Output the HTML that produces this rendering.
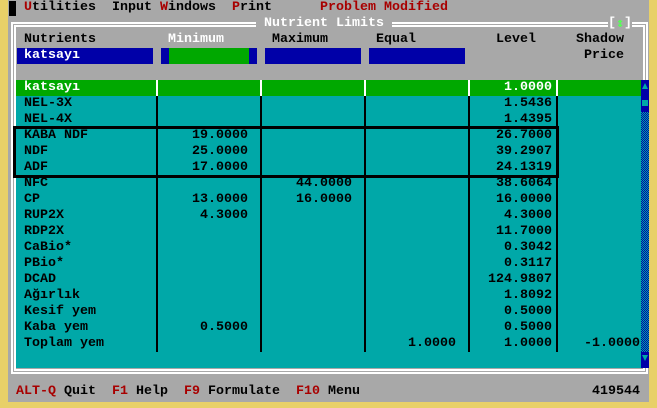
<!DOCTYPE html>
<html><head><meta charset="utf-8"><style>
*{margin:0;padding:0;box-sizing:border-box}
body{width:657px;height:408px;background:#e8d068;position:relative;overflow:hidden;font-family:"Liberation Mono",monospace;font-size:13.33px;font-weight:bold;line-height:16px}
.a{position:absolute;white-space:pre}
.r{position:absolute;white-space:pre;text-align:right}
.red{color:#a80000}.w{color:#fff}.k{color:#000}
.vl{position:absolute;width:2px;background:#000;top:96px;height:256px}
.vw{position:absolute;width:2px;background:#fff;top:80px;height:16px}
</style></head><body>
<div style="position:absolute;left:8px;top:0;width:641px;height:402px;background:#a8a8a8"></div>
<div style="position:absolute;left:9px;top:1px;width:7px;height:15px;background:#000"></div>
<div class="a k" style="left:24px;top:0"><span class="red">U</span>tilities  Input <span class="red">W</span>indows  <span class="red">P</span>rint</div>
<div class="a red" style="left:320px;top:0">Problem Modified</div>
<div style="position:absolute;left:11px;top:22px;width:637px;height:352px;border:2px solid #fff"></div>
<div style="position:absolute;left:14px;top:25px;width:631px;height:346px;border:2px solid #fff"></div>
<div class="a w" style="left:256px;top:16px;background:#a8a8a8"> Nutrient Limits </div>
<div class="a w" style="left:608px;top:16px;background:#a8a8a8">[ ]</div>
<div class="a" style="left:616px;top:16px;color:#55ff55;font-family:'DejaVu Sans Mono',monospace">↕</div>
<div class="a k" style="left:24px;top:32px">Nutrients</div>
<div class="a w" style="left:168px;top:32px">Minimum</div>
<div class="a k" style="left:272px;top:32px">Maximum</div>
<div class="a k" style="left:376px;top:32px">Equal</div>
<div class="a k" style="left:496px;top:32px">Level</div>
<div class="a k" style="left:576px;top:32px">Shadow</div>
<div class="a k" style="left:584px;top:48px">Price</div>
<div style="position:absolute;left:17px;top:48px;width:136px;height:16px;background:#0000a8"></div>
<div class="a w" style="left:24px;top:48px">katsayı</div>
<div style="position:absolute;left:161px;top:48px;width:96px;height:16px;background:#0000a8"></div>
<div style="position:absolute;left:169px;top:48px;width:80px;height:16px;background:#00a800"></div>
<div style="position:absolute;left:265px;top:48px;width:96px;height:16px;background:#0000a8"></div>
<div style="position:absolute;left:369px;top:48px;width:96px;height:16px;background:#0000a8"></div>
<div style="position:absolute;left:16px;top:80px;width:625px;height:288px;background:#00a8a8"></div>
<div style="position:absolute;left:16px;top:80px;width:625px;height:16px;background:#00a800"></div>
<div class="vw" style="left:156px"></div><div class="vw" style="left:260px"></div><div class="vw" style="left:364px"></div><div class="vw" style="left:468px"></div><div class="vw" style="left:556px"></div>
<div class="vl" style="left:156px"></div><div class="vl" style="left:260px"></div><div class="vl" style="left:364px"></div><div class="vl" style="left:468px"></div><div class="vl" style="left:556px"></div>
<div style="position:absolute;left:13px;top:126px;width:546px;height:52px;border:3px solid #000"></div>
<div style="position:absolute;left:641px;top:80px;width:8px;height:288px;background:repeating-conic-gradient(#0000a8 0 25%,#00a8a8 0 50%) 0 0/2px 2px"></div>
<div style="position:absolute;left:641px;top:80px;width:8px;height:32px;background:#0000a8"></div>
<div style="position:absolute;left:642px;top:83px;width:0;height:0;border-left:3px solid transparent;border-right:3px solid transparent;border-bottom:6px solid #00a8a8"></div>
<div style="position:absolute;left:642px;top:100px;width:6px;height:6px;background:#00a8a8"></div>
<div style="position:absolute;left:641px;top:352px;width:8px;height:16px;background:#0000a8"></div>
<div style="position:absolute;left:642px;top:355px;width:0;height:0;border-left:3px solid transparent;border-right:3px solid transparent;border-top:6px solid #00a8a8"></div>
<div class="a w" style="left:24px;top:80px">katsayı</div><div class="r w" style="right:105px;top:80px">1.0000</div>
<div class="a k" style="left:24px;top:96px">NEL-3X</div><div class="r k" style="right:105px;top:96px">1.5436</div>
<div class="a k" style="left:24px;top:112px">NEL-4X</div><div class="r k" style="right:105px;top:112px">1.4395</div>
<div class="a k" style="left:24px;top:128px">KABA NDF</div><div class="r k" style="right:409px;top:128px">19.0000</div><div class="r k" style="right:105px;top:128px">26.7000</div>
<div class="a k" style="left:24px;top:144px">NDF</div><div class="r k" style="right:409px;top:144px">25.0000</div><div class="r k" style="right:105px;top:144px">39.2907</div>
<div class="a k" style="left:24px;top:160px">ADF</div><div class="r k" style="right:409px;top:160px">17.0000</div><div class="r k" style="right:105px;top:160px">24.1319</div>
<div class="a k" style="left:24px;top:176px">NFC</div><div class="r k" style="right:305px;top:176px">44.0000</div><div class="r k" style="right:105px;top:176px">38.6064</div>
<div class="a k" style="left:24px;top:192px">CP</div><div class="r k" style="right:409px;top:192px">13.0000</div><div class="r k" style="right:305px;top:192px">16.0000</div><div class="r k" style="right:105px;top:192px">16.0000</div>
<div class="a k" style="left:24px;top:208px">RUP2X</div><div class="r k" style="right:409px;top:208px">4.3000</div><div class="r k" style="right:105px;top:208px">4.3000</div>
<div class="a k" style="left:24px;top:224px">RDP2X</div><div class="r k" style="right:105px;top:224px">11.7000</div>
<div class="a k" style="left:24px;top:240px">CaBio*</div><div class="r k" style="right:105px;top:240px">0.3042</div>
<div class="a k" style="left:24px;top:256px">PBio*</div><div class="r k" style="right:105px;top:256px">0.3117</div>
<div class="a k" style="left:24px;top:272px">DCAD</div><div class="r k" style="right:105px;top:272px">124.9807</div>
<div class="a k" style="left:24px;top:288px">Ağırlık</div><div class="r k" style="right:105px;top:288px">1.8092</div>
<div class="a k" style="left:24px;top:304px">Kesif yem</div><div class="r k" style="right:105px;top:304px">0.5000</div>
<div class="a k" style="left:24px;top:320px">Kaba yem</div><div class="r k" style="right:409px;top:320px">0.5000</div><div class="r k" style="right:105px;top:320px">0.5000</div>
<div class="a k" style="left:24px;top:336px">Toplam yem</div><div class="r k" style="right:201px;top:336px">1.0000</div><div class="r k" style="right:105px;top:336px">1.0000</div><div class="r k" style="right:17px;top:336px">-1.0000</div>
<div class="a k" style="left:16px;top:384px"><span class="red">ALT-Q</span> Quit  <span class="red">F1</span> Help  <span class="red">F9</span> Formulate  <span class="red">F10</span> Menu</div>
<div class="r k" style="right:17px;top:384px">419544</div>
</body></html>
